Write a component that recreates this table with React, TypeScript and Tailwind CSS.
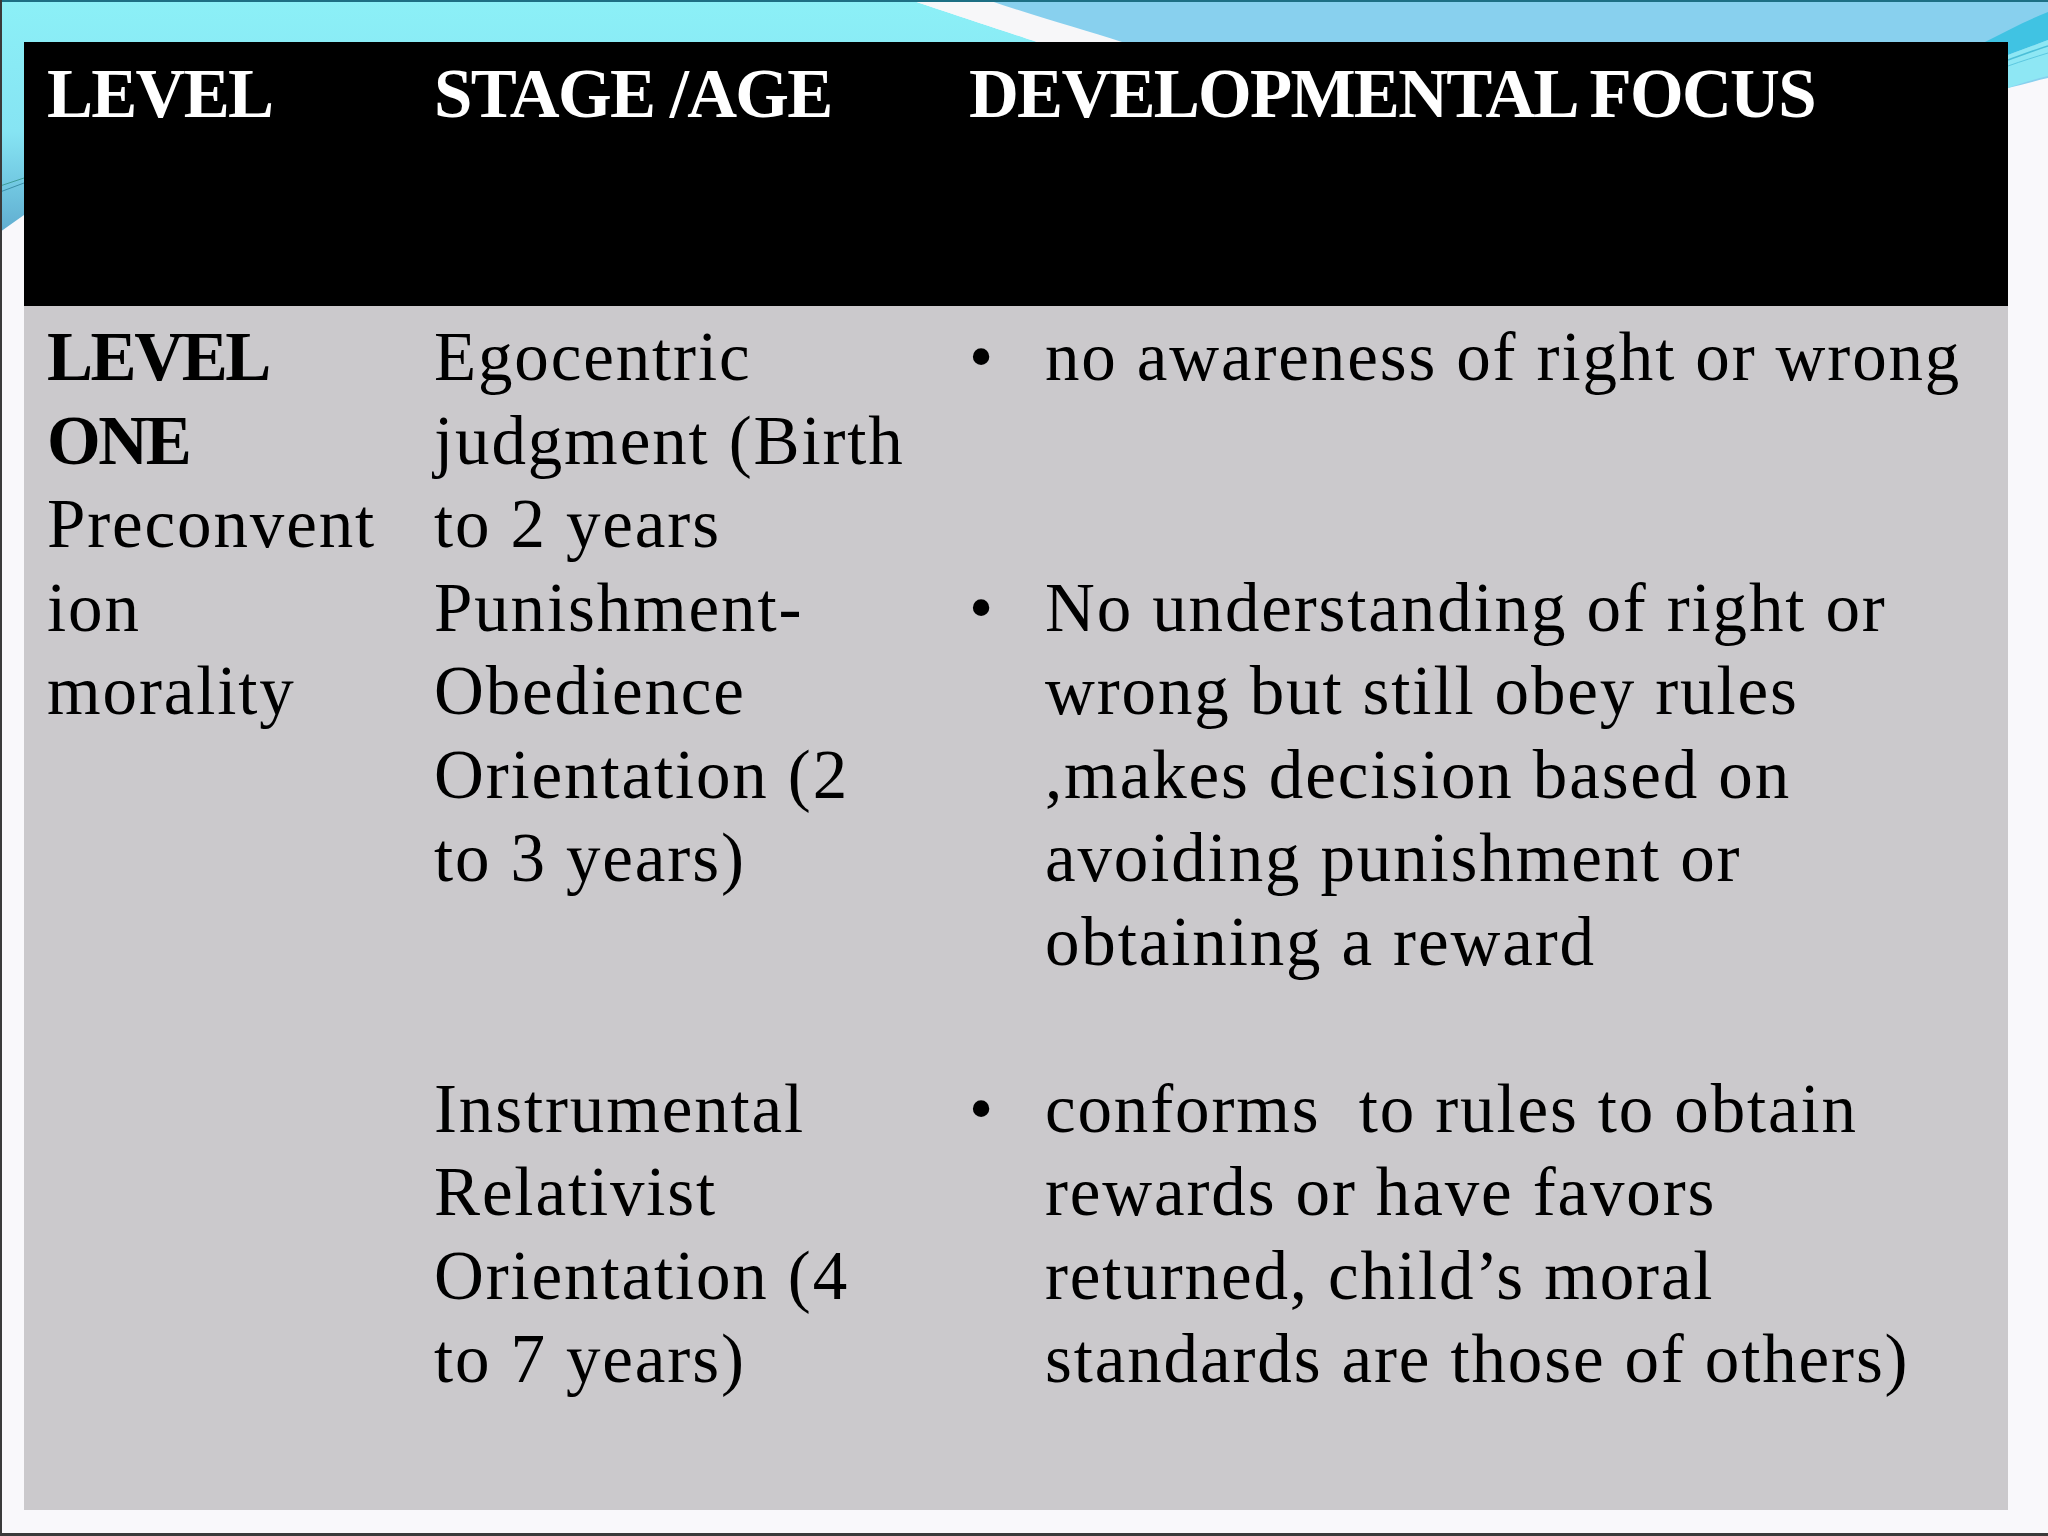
const levelLines: { text: string; bold?: boolean }[] = [
  { text: 'LEVEL', bold: true },
  { text: 'ONE', bold: true },
  { text: 'Preconvent' },
  { text: 'ion' },
  { text: 'morality' },
];

const stageLines = [
  'Egocentric',
  'judgment (Birth',
  'to 2 years',
  'Punishment-',
  'Obedience',
  'Orientation (2',
  'to 3 years)',
  '',
  '',
  'Instrumental',
  'Relativist',
  'Orientation (4',
  'to 7 years)',
];

const focusLines: { text: string; bullet?: boolean }[] = [
  { text: 'no awareness of right or wrong', bullet: true },
  { text: '' },
  { text: '' },
  { text: 'No understanding of right or', bullet: true },
  { text: 'wrong but still obey rules' },
  { text: ',makes decision based on' },
  { text: 'avoiding punishment or' },
  { text: 'obtaining a reward' },
  { text: '' },
  { text: 'conforms  to rules to obtain', bullet: true },
  { text: 'rewards or have favors' },
  { text: 'returned, child\u2019s moral' },
  { text: 'standards are those of others)' },
];

function SlideDecor() {
  return (
    <svg className="absolute inset-0" width="2048" height="1536" viewBox="0 0 2048 1536">
      <defs>
        <linearGradient id="leftBand" x1="0" y1="0" x2="0" y2="240" gradientUnits="userSpaceOnUse">
          <stop offset="0" stopColor="#8cf0f7" />
          <stop offset="0.55" stopColor="#86e4f3" />
          <stop offset="0.8" stopColor="#6fc4df" />
          <stop offset="1" stopColor="#5ea8cc" />
        </linearGradient>
      </defs>
      <path d="M0 0 H911 C970 20 1010 33 1037 42 H24 V215 L0 232 Z" fill="url(#leftBand)" />
      <path d="M911 0 H988 C1040 18 1085 30 1122 42 H1037 C1010 33 970 20 911 0 Z" fill="#f7f7f9" />
      <path d="M988 0 H2048 V78 C2035 81 2020 85 2008 88 V42 H1122 C1085 30 1040 18 988 0 Z" fill="#88d0ee" />
      <path d="M1985 42 C2008 30 2028 20 2048 12 V40 C2035 45 2020 50 2008 55 V42 Z" fill="#40c3e3" />
      <path d="M2008 55 C2022 50 2035 45 2048 40 V76 C2032 80 2018 84 2008 88 Z" fill="#8ee7f4" />
      <path d="M2008 60 C2022 55 2035 50 2048 46" stroke="#4cbfd8" strokeWidth="1.5" fill="none" />
      <path d="M2008 66 C2022 61 2035 57 2048 53" stroke="#5cc8e0" strokeWidth="1" fill="none" />
      <path d="M0 186 L24 178" stroke="#3e9c9a" strokeWidth="1" />
      <path d="M0 192 L24 183" stroke="#3b8ea8" strokeWidth="1" />
      <rect x="0" y="0" width="2048" height="2" fill="#1d6f84" />
      <rect x="0" y="0" width="2" height="1536" fill="#3a3a3a" />
      <rect x="0" y="1533" width="2048" height="3" fill="#3a3a3a" />
    </svg>
  );
}

export default function App() {
  return (
    <div className="relative w-[2048px] h-[1536px] overflow-hidden bg-[#f9f8fb] font-['Liberation_Serif',serif]">
      <SlideDecor />

      <div className="relative pt-[42px] pl-[24px]">
        <div className="w-[1984px]">
          {/* header row */}
          <div className="grid grid-cols-[387px_535px_1fr] h-[264px] bg-black pt-[11px] text-white font-bold text-[69px] leading-[83.5px] tracking-[-0.025em] whitespace-nowrap">
            <div className="pl-[23px]">LEVEL</div>
            <div className="pl-[23px]">STAGE /AGE</div>
            <div className="pl-[23px]">DEVELOPMENTAL FOCUS</div>
          </div>

          {/* body row */}
          <div className="grid grid-cols-[387px_535px_1fr] h-[1204px] bg-[#cbc9cc] pt-[10px] text-black text-[69px] leading-[83.5px] whitespace-pre">
            <div className="pl-[23px]">
              {levelLines.map((l, i) => (
                <div key={i} className={l.bold ? 'font-bold tracking-[-0.035em]' : 'tracking-[0.027em]'}>{l.text}</div>
              ))}
            </div>
            <div className="pl-[23px] tracking-[0.027em]">
              {stageLines.map((t, i) => (
                <div key={i}>{t || '\u00a0'}</div>
              ))}
            </div>
            <div className="pl-[23px] tracking-[0.027em]">
              {focusLines.map((l, i) => (
                <div key={i} className="flex">
                  <span className="w-[76px] shrink-0">{l.bullet ? '\u2022' : '\u00a0'}</span>
                  <span>{l.text || '\u00a0'}</span>
                </div>
              ))}
            </div>
          </div>
        </div>
      </div>
    </div>
  );
}
